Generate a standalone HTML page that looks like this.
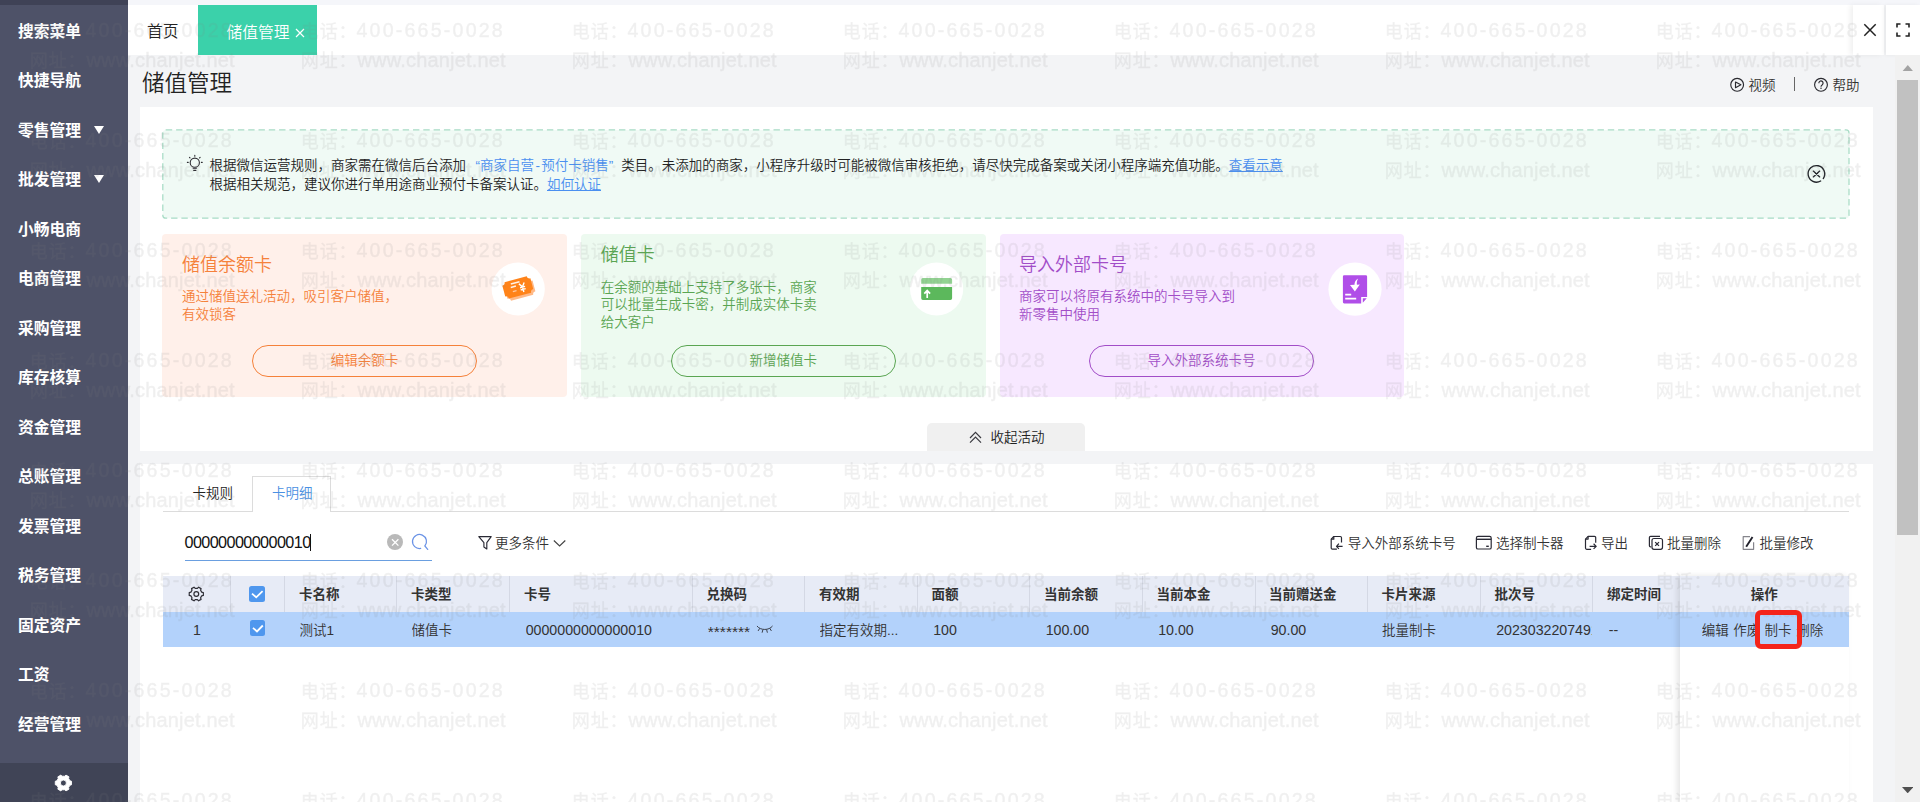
<!DOCTYPE html>
<html lang="zh-CN">
<head>
<meta charset="utf-8">
<title>储值管理</title>
<style>
*{box-sizing:border-box;margin:0;padding:0}
html,body{width:1920px;height:802px;overflow:hidden;background:#f3f4f6;font-family:"Liberation Sans", "Noto Sans CJK SC", sans-serif;color:#333;font-size:13.5px;font-weight:350}
.abs{position:absolute}
.t{position:absolute;white-space:nowrap}
#side{position:absolute;left:0;top:0;width:128px;height:802px;background:#4e5268}
#side .top{position:absolute;left:0;top:0;width:128px;height:5px;background:#3f4256}
#side .mi{position:absolute;left:18px;height:24px;line-height:24px;color:#fff;font-size:15.75px;font-weight:700;white-space:nowrap}
#side .tri{position:absolute;left:93.6px;width:0;height:0;border-left:5.8px solid transparent;border-right:5.8px solid transparent;border-top:8.4px solid #fff}
#side .bot{position:absolute;left:0;top:762.6px;width:128px;height:40px;background:#404456}
#topstrip{position:absolute;left:128px;top:0;width:1792px;height:5px;background:#f5f6fa}
#tabbar{position:absolute;left:128px;top:5px;width:1725px;height:50px;background:#fff}
.panel{position:absolute;left:140px;width:1733px;background:#fff}
.card{position:absolute;top:233.5px;width:404.6px;height:163.2px;border-radius:4px}
.card .ttl{position:absolute;left:19.5px;font-size:18px;line-height:24px;white-space:nowrap}
.card .desc{position:absolute;left:19.5px;font-size:13.5px;line-height:17.6px;white-space:nowrap}
.card .btn{position:absolute;left:89.7px;top:111.6px;width:224.8px;height:32px;border-radius:17px;border:1px solid;line-height:30.6px;text-align:center;font-size:13.5px}
.wm{position:absolute;left:0;top:0;width:1920px;height:802px;overflow:hidden;pointer-events:none;color:#808080;opacity:0.118;-webkit-text-stroke:0.45px #808080;filter:blur(0.5px);font-size:18px;letter-spacing:0.9px;line-height:24px;z-index:50}
.wm div{position:absolute;white-space:nowrap}
.wm .d{letter-spacing:2.2px;margin-left:-1px;font-size:19.6px;position:relative;top:-0.7px}
.wm .w{letter-spacing:0.18px;margin-left:0;font-size:20px;position:relative;top:-0.5px}
.th{position:absolute;top:577px;height:35px;line-height:35px;font-weight:700;font-size:13.5px;color:#333;white-space:nowrap}
.td{position:absolute;top:612.5px;height:35px;line-height:35px;font-size:13.5px;color:#333;white-space:nowrap;overflow:hidden}
.sep{position:absolute;top:576.2px;width:1px;height:35.8px;background:#d4d8e4}
.tb{position:absolute;top:532px;height:24px;line-height:24px;font-size:13.5px;color:#333;white-space:nowrap}
.cb{position:absolute;width:16px;height:16px;border-radius:2.5px;background:#4f97ee}
</style>
</head>
<body>
<div id="side"><div class="top"></div>
<div class="mi" style="top:19.5px">搜索菜单</div>
<div class="mi" style="top:69px">快捷导航</div>
<div class="mi" style="top:118.5px">零售管理</div>
<div class="mi" style="top:168px">批发管理</div>
<div class="mi" style="top:217.5px">小畅电商</div>
<div class="mi" style="top:267px">电商管理</div>
<div class="mi" style="top:316.5px">采购管理</div>
<div class="mi" style="top:366px">库存核算</div>
<div class="mi" style="top:415.5px">资金管理</div>
<div class="mi" style="top:465px">总账管理</div>
<div class="mi" style="top:514.5px">发票管理</div>
<div class="mi" style="top:564px">税务管理</div>
<div class="mi" style="top:613.5px">固定资产</div>
<div class="mi" style="top:663px">工资</div>
<div class="mi" style="top:712.5px">经营管理</div>
<div class="tri" style="top:125.5px"></div>
<div class="tri" style="top:175px"></div>
<div class="bot"></div>
<svg class="abs" style="left:50px;top:770px" width="28" height="28" viewBox="50 770 28 28" ><path fill="#fff" stroke="#fff" stroke-width="0.9" stroke-linejoin="round" fill-rule="evenodd" d="M69.92 780.75L71.52 781.27L71.52 784.73L69.92 785.25L68.61 787.53L68.95 789.17L65.96 790.89L64.72 789.77L62.08 789.77L60.84 790.89L57.85 789.17L58.19 787.53L56.88 785.25L55.28 784.73L55.28 781.27L56.88 780.75L58.19 778.47L57.85 776.83L60.84 775.11L62.08 776.23L64.72 776.23L65.96 775.11L68.95 776.83L68.61 778.47ZM60.4 783a3 3 0 1 0 6 0a3 3 0 1 0-6 0Z"/></svg>
</div>
<div id="topstrip"></div>
<div id="tabbar"></div>
<div class="t" style="left:147px;top:20px;height:24px;line-height:24px;font-size:15.75px;color:#222">首页</div>
<div class="abs" style="left:198px;top:5px;width:119px;height:50px;background:#3bd1aa"></div>
<div class="t" style="left:226.5px;top:20.7px;height:24px;line-height:24px;font-size:15.75px;color:#fff">储值管理</div>
<svg class="abs" style="left:295px;top:27.6px" width="10" height="10" viewBox="0 0 10 10"><path d="M1 1L9 9M9 1L1 9" stroke="#fff" stroke-width="1.2" fill="none"/></svg>
<div class="abs" style="left:1853px;top:5px;width:31px;height:50px;background:#fff;box-shadow:-3px 0 5px rgba(0,0,0,0.06)"></div>
<svg class="abs" style="left:1862.5px;top:22.5px" width="14" height="14" viewBox="0 0 14 14"><path d="M1.3 1.3L12.7 12.7M12.7 1.3L1.3 12.7" stroke="#222" stroke-width="1.5" fill="none"/></svg>
<div class="abs" style="left:1886px;top:5px;width:34px;height:50px;background:#fff;box-shadow:-2px 0 4px rgba(0,0,0,0.05)"></div>
<svg class="abs" style="left:1896px;top:23px" width="14" height="14" viewBox="0 0 14 14"><path d="M1 4.5V1H4.5M9.5 1H13V4.5M13 9.5V13H9.5M4.5 13H1V9.5" stroke="#222" stroke-width="1.6" fill="none"/></svg>
<div class="t" style="left:142px;top:66.8px;height:34px;line-height:34px;font-size:22.5px;color:#222">储值管理</div>
<svg class="abs" style="left:1728px;top:76px" width="18" height="18" viewBox="1728 76 18 18" fill="none" stroke="#2a2a30" stroke-width="1.15"><circle cx="1737.15" cy="84.8" r="6.4"/><path d="M1735.5 82V87.7L1740.9 84.8Z" stroke-linejoin="round"/></svg>
<div class="t" style="left:1748.5px;top:73.5px;height:24px;line-height:24px;font-size:13.5px;color:#333">视频</div>
<div class="abs" style="left:1794px;top:77px;width:1.3px;height:14px;background:#666"></div>
<svg class="abs" style="left:1812px;top:76px" width="18" height="18" viewBox="1812 76 18 18" fill="none" stroke="#2a2a30" stroke-width="1.15"><circle cx="1821" cy="84.8" r="6.4"/><path d="M1818.9 83.3A2.1 2.1 0 1 1 1822.3 84.7C1821.4 85.3 1821 85.7 1821 86.7"/><circle cx="1821" cy="88.3" r="0.75" fill="#2a2a30" stroke="none"/></svg>
<div class="t" style="left:1832.5px;top:73.5px;height:24px;line-height:24px;font-size:13.5px;color:#333">帮助</div>
<div class="panel" style="top:107px;height:344px"></div>
<svg class="abs" style="left:160px;top:127px" width="1692" height="94" viewBox="160 127 1692 94" ><rect x="162.8" y="129.9" width="1686.2" height="88.3" rx="3" fill="#f0faf5" stroke="#a8dcc6" stroke-width="1.25" stroke-dasharray="6.4 3.9"/></svg>
<svg class="abs" style="left:185px;top:153px" width="20" height="20" viewBox="185 153 20 20" fill="none" stroke="#2e2e33" stroke-width="1.1" stroke-linecap="round"><circle cx="194.8" cy="162.7" r="4.6"/><path d="M193.3 168.3H196.3" stroke-width="1.4" stroke="#55555c"/><path d="M193.7 170.4H195.9"/><path d="M194.8 155.4V156.2M187.4 162.4H188.2M201.4 162.4H202.2M189.5 157.4L190 157.9M200.1 157.4L199.6 157.9" stroke-width="1.15"/></svg>
<div class="t" style="left:209.5px;top:155.5px;height:20px;line-height:20px;font-size:13.5px;color:#222">根据微信运营规则，商家需在微信后台添加<span style="color:#4a8ff0;margin-left:9.5px;margin-right:8px">“商家自营<span style="display:inline-block;width:7.3px;text-align:center">-</span>预付卡销售”</span>类目。未添加的商家，小程序升级时可能被微信审核拒绝，请尽快完成备案或关闭小程序端充值功能。<span style="color:#4a8ff0;text-decoration:underline">查看示意</span></div>
<div class="t" style="left:209.5px;top:175.3px;height:20px;line-height:20px;font-size:13.5px;color:#222">根据相关规范，建议你进行单用途商业预付卡备案认证。<span style="color:#4a8ff0;text-decoration:underline">如何认证</span></div>
<svg class="abs" style="left:1805px;top:163px" width="23" height="23" viewBox="1805 163 23 23" fill="none" stroke="#22252a" stroke-width="1.35" stroke-linecap="round"><path d="M1820.67 181.01A8.3 8.3 0 1 1 1823.28 178.54"/><path d="M1813.3 171.1L1819.7 176.9M1819.7 171.1L1813.3 176.9"/></svg>
<div class="card" style="left:162.4px;background:#fff0ea;color:#f5813a"><div class="ttl" style="top:19.3px">储值余额卡</div><div class="desc" style="top:54.8px">通过储值送礼活动，吸引客户储值，</div><div class="desc" style="top:72.4px">有效锁客</div><div class="btn" style="border-color:#f5813a">编辑余额卡</div></div>
<svg class="abs" style="left:488px;top:259px" width="60" height="60" viewBox="488 259 60 60" ><circle cx="518.2" cy="289" r="26.6" fill="#fff"/><g transform="rotate(-15 517.8 287.4)"><path transform="translate(1.5,2.7)" fill="#ffb987" d="M506.3 278.9H529.3a3 3 0 0 0 3 3V292.9a3 3 0 0 0-3 3H506.3a3 3 0 0 0-3-3V281.9a3 3 0 0 0 3-3z"/><path fill="#ff8319" d="M506.3 278.9H529.3a3 3 0 0 0 3 3V292.9a3 3 0 0 0-3 3H506.3a3 3 0 0 0-3-3V281.9a3 3 0 0 0 3-3z"/><path d="M511.9 282.4H520.9M511 285.6H516.3" stroke="#fff1e6" stroke-width="1.5" fill="none"/><path d="M511.9 290.3H515.7" stroke="#ffc9a0" stroke-width="1.3" fill="none"/><path d="M519.8 284.3L522.5 288L525.2 284.3M519.9 288.3H525.1M519.9 290.6H525.1M522.5 288V293.4" stroke="#fff" stroke-width="1.4" fill="none"/></g></svg>
<div class="card" style="left:581.2px;background:#edfaf0;color:#5aa552"><div class="ttl" style="top:9.6px">储值卡</div><div class="desc" style="top:45.35px">在余额的基础上支持了多张卡，商家</div><div class="desc" style="top:62.95px">可以批量生成卡密，并制成实体卡卖</div><div class="desc" style="top:80.55px">给大客户</div><div class="btn" style="border-color:#5aa552">新增储值卡</div></div>
<svg class="abs" style="left:906px;top:259px" width="60" height="60" viewBox="906 259 60 60" ><circle cx="936.6" cy="289" r="26.6" fill="#fff"/><path fill="#92d392" d="M922.9 278.1H950.4a1.7 1.7 0 0 1 1.7 1.7V283.8H921.2V279.8a1.7 1.7 0 0 1 1.7-1.7z"/><path fill="#5cb85c" d="M921.2 287.1H952.1V298.3a1.7 1.7 0 0 1-1.7 1.7H922.9a1.7 1.7 0 0 1-1.7-1.7z"/><path d="M927.2 298V291.3M924.3 293.7L927.2 290.6L930.1 293.7" stroke="#fff" stroke-width="1.7" fill="none"/></svg>
<div class="card" style="left:999.5px;background:#f7e8ff;color:#a24dc8"><div class="ttl" style="top:19.3px">导入外部卡号</div><div class="desc" style="top:54.8px">商家可以将原有系统中的卡号导入到</div><div class="desc" style="top:72.4px">新零售中使用</div><div class="btn" style="border-color:#a24dc8">导入外部系统卡号</div></div>
<svg class="abs" style="left:1325px;top:259px" width="60" height="60" viewBox="1325 259 60 60" ><circle cx="1355" cy="289.2" r="26.6" fill="#fff"/><path fill="#b04ee8" d="M1344.2 275.2H1365.8a1.3 1.3 0 0 1 1.3 1.3V296.9H1361.2V303.4H1344.2a1.3 1.3 0 0 1-1.3-1.3V276.5a1.3 1.3 0 0 1 1.3-1.3z"/><path fill="#b04ee8" d="M1362.8 298.3H1366.7L1362.8 302.8z"/><path d="M1345.2 294.7H1351.2M1345.2 298.6H1356.2" stroke="#fff" stroke-width="1.8" fill="none"/><path fill="#fff" d="M1358.2 278.4c-2.7 1.3-3.8 3.6-3.7 6.4l-4.5 0.3 4.9 6.4 4.9-7-2.9 0.2c-0.3-2.3 0.1-4.3 1.3-6.3z"/></svg>
<div class="abs" style="left:927px;top:423px;width:158px;height:28px;background:#f0f0f0;border-radius:5px 5px 0 0"></div>
<svg class="abs" style="left:967px;top:429px" width="18" height="16" viewBox="967 429 18 16" fill="none" stroke="#3a3a40" stroke-width="1.2"><path d="M970 438L975.5 432.4L981 438M970 442.6L975.5 437L981 442.6"/></svg>
<div class="t" style="left:990.5px;top:425.5px;height:24px;line-height:24px;font-size:13.5px;color:#222">收起活动</div>
<div class="panel" style="top:463.5px;height:340px"></div>
<div class="abs" style="left:163px;top:511px;width:1686px;height:1px;background:#dcdcdc"></div>
<div class="abs" style="left:252px;top:476px;width:78.5px;height:36px;background:#fff;border:1px solid #dcdcdc;border-bottom:none"></div>
<div class="t" style="left:192.5px;top:481.7px;height:24px;line-height:24px;font-size:13.5px;color:#222">卡规则</div>
<div class="t" style="left:272px;top:481.7px;height:24px;line-height:24px;font-size:13.5px;color:#4a90e2">卡明细</div>
<div class="t" style="left:184.5px;top:530px;height:24px;line-height:24px;font-size:16.2px;letter-spacing:-0.6px;color:#111">000000000000010</div>
<div class="abs" style="left:310.3px;top:533.6px;width:1.1px;height:17px;background:#111"></div>
<div class="abs" style="left:184.5px;top:560px;width:247px;height:1.3px;background:#6a9fe0"></div>
<svg class="abs" style="left:385px;top:532px" width="20" height="20" viewBox="385 532 20 20" ><circle cx="395" cy="542" r="8" fill="#b9b9b9"/><path d="M392 539.2L398.4 545.6M398.4 539.2L392 545.6" stroke="#fff" stroke-width="1.3" fill="none"/></svg>
<svg class="abs" style="left:410px;top:532px" width="20" height="20" viewBox="410 532 20 20" ><path d="M420.7 548.4A7 7 0 1 1 424.86 546L427.7 549.4" fill="none" stroke="#6b93e6" stroke-width="1.25" stroke-linecap="round"/></svg>
<svg class="abs" style="left:476px;top:534px" width="18" height="18" viewBox="476 534 18 18" ><path d="M478.8 536.6H491.2L486.8 542.6V549L483.9 547V542.6Z" fill="none" stroke="#2a2a35" stroke-width="1.15" stroke-linejoin="round"/></svg>
<div class="tb" style="left:495px">更多条件</div>
<svg class="abs" style="left:551px;top:536px" width="18" height="14" viewBox="551 536 18 14" ><path d="M553.85 540.5L559.6 546L565.3 540.5" fill="none" stroke="#444" stroke-width="1.15"/></svg>
<div class="tb" style="left:1347.8px">导入外部系统卡号</div>
<div class="tb" style="left:1496px">选择制卡器</div>
<div class="tb" style="left:1601px">导出</div>
<div class="tb" style="left:1667px">批量删除</div>
<div class="tb" style="left:1759.5px">批量修改</div>
<svg class="abs" style="left:1328px;top:533px" width="18" height="19" viewBox="1328 533 18 19" fill="none" stroke="#2a2a35" stroke-width="1.2" stroke-linejoin="round"><path d="M1341.5 542.6V537.7a1.2 1.2 0 0 0-1.2-1.2H1333.8L1331.2 539.2V548a1.2 1.2 0 0 0 1.2 1.2H1336.9"/><path d="M1333.8 536.5V539.2H1331.2"/><path d="M1342.6 546.3H1336.7M1338.9 543.7L1336.5 546.3L1338.9 548.9"/></svg>
<svg class="abs" style="left:1474px;top:533px" width="20" height="19" viewBox="1474 533 20 19" fill="none" stroke="#2a2a35" stroke-width="1.2" stroke-linejoin="round"><rect x="1476.4" y="536.4" width="14.8" height="12.6" rx="1.6"/><path d="M1476.4 539.3H1491.2" stroke-width="1.4"/><path d="M1486.2 546.3H1488.8" stroke-width="1.4"/></svg>
<svg class="abs" style="left:1583px;top:533px" width="18" height="19" viewBox="1583 533 18 19" fill="none" stroke="#2a2a35" stroke-width="1.2" stroke-linejoin="round"><path d="M1595.7 542.8V537.6a1.2 1.2 0 0 0-1.2-1.2H1588.1L1585.5 539.1V548.1a1.2 1.2 0 0 0 1.2 1.2H1591.1"/><path d="M1588.1 536.4V539.1H1585.5"/><path d="M1589.6 546.35H1596M1593.6 543.8L1596.2 546.35L1593.6 548.9"/></svg>
<svg class="abs" style="left:1647px;top:533px" width="18" height="19" viewBox="1647 533 18 19" fill="none" stroke="#2a2a35" stroke-width="1.2" stroke-linejoin="round"><path d="M1660 536.3H1650.6a1.2 1.2 0 0 0-1.2 1.2V545.7a1.2 1.2 0 0 0 1.2 1.2H1651.2"/><rect x="1652" y="538.5" width="10.5" height="10.8" rx="2"/><path d="M1655.2 542.1L1659 545.9M1659 542.1L1655.2 545.9" stroke-width="1.3"/></svg>
<svg class="abs" style="left:1741px;top:533px" width="18" height="19" viewBox="1741 533 18 19" fill="none" stroke="#2a2a35" stroke-width="1.2" stroke-linejoin="round"><path d="M1750 536.7H1743.2V549.3H1753.6V542.2" stroke="#85858c"/><path d="M1752.5 536.9L1746.2 546.8" stroke="#22222c" stroke-width="1.9"/></svg>
<div class="abs" style="left:163px;top:576.2px;width:1686px;height:36px;background:#e7ebf6"></div>
<div class="abs" style="left:163px;top:612px;width:1686px;height:35.3px;background:#b3d2fb"></div>
<div class="sep" style="left:230px"></div><div class="sep" style="left:283.5px"></div><div class="sep" style="left:395.9px"></div><div class="sep" style="left:508.5px"></div><div class="sep" style="left:691.5px"></div><div class="sep" style="left:804.1px"></div><div class="sep" style="left:916.7px"></div><div class="sep" style="left:1029.4px"></div><div class="sep" style="left:1141.9px"></div><div class="sep" style="left:1254.5px"></div><div class="sep" style="left:1366.9px"></div><div class="sep" style="left:1479.6px"></div><div class="sep" style="left:1592px"></div>
<div class="th" style="left:299px">卡名称</div><div class="td" style="left:299.5px;width:96.5px">测试1</div>
<div class="th" style="left:411px">卡类型</div><div class="td" style="left:411.5px;width:97.5px">储值卡</div>
<div class="th" style="left:524px">卡号</div><div class="td" style="left:525.7px;width:165.8px;font-size:14.2px">0000000000000010</div>
<div class="th" style="left:706.5px">兑换码</div>
<div class="th" style="left:819px">有效期</div><div class="td" style="left:819.5px;width:97px">指定有效期...</div>
<div class="th" style="left:931.5px">面额</div><div class="td" style="left:933.2px;width:95.8px;font-size:14.2px">100</div>
<div class="th" style="left:1044px">当前余额</div><div class="td" style="left:1045.7px;width:95.8px;font-size:14.2px">100.00</div>
<div class="th" style="left:1156.5px">当前本金</div><div class="td" style="left:1158.2px;width:95.8px;font-size:14.2px">10.00</div>
<div class="th" style="left:1269px">当前赠送金</div><div class="td" style="left:1270.7px;width:95.8px;font-size:14.2px">90.00</div>
<div class="th" style="left:1381.5px">卡片来源</div><div class="td" style="left:1382px;width:97.5px">批量制卡</div>
<div class="th" style="left:1494.5px">批次号</div><div class="td" style="left:1496.2px;width:95.8px;font-size:14.2px">2023032207491</div>
<div class="th" style="left:1607px">绑定时间</div><div class="td" style="left:1608.7px;width:70.3px;font-size:14.2px">--</div>
<div class="td" style="left:707.8px;top:613.7px;width:60px;font-size:15.5px">*******</div>
<svg class="abs" style="left:754px;top:622px" width="22" height="14" viewBox="754 622 22 14" fill="none" stroke="#3a3f4a" stroke-width="1" stroke-linecap="round"><path d="M757.2 626.3C760.5 630.6 769 630.6 772.3 626.3M759.5 628.7L758.3 630.6M762.8 630L762.2 632.3M766.7 630L767.3 632.3M770 628.7L771.2 630.6"/></svg>
<svg class="abs" style="left:186px;top:584px" width="21" height="20" viewBox="186 584 21 20" fill="none" stroke="#2e2e36" stroke-width="1.2" stroke-linejoin="round"><path d="M201.69 592.14L203.36 592.56L203.36 595.44L201.69 595.86L200.6 597.74L201.07 599.39L198.58 600.83L197.39 599.6L195.21 599.6L194.02 600.83L191.53 599.39L192 597.74L190.91 595.86L189.24 595.44L189.24 592.56L190.91 592.14L192 590.26L191.53 588.61L194.02 587.17L195.21 588.4L197.39 588.4L198.58 587.17L201.07 588.61L200.6 590.26Z"/><circle cx="196.3" cy="594" r="2.4"/></svg>
<div class="td" style="left:193px;font-size:14.2px">1</div>
<div class="cb" style="left:249px;top:586px"></div>
<svg class="abs" style="left:249px;top:586px" width="16" height="16" viewBox="249 586 16 16" ><path d="M252 593.6L256.2 597.3L262.6 591.2" fill="none" stroke="#fff" stroke-width="1.8"/></svg>
<div class="cb" style="left:250px;top:620.3px;width:15px;height:15.4px"></div>
<svg class="abs" style="left:250px;top:620px" width="16" height="16" viewBox="250 620 16 16" ><path d="M253 627.9L257 631.5L262.8 625.5" fill="none" stroke="#fff" stroke-width="1.8"/></svg>
<div class="abs" style="left:1679.6px;top:576.2px;width:169.4px;height:226px;background:#fff;box-shadow:-3px 0 6px rgba(0,0,0,0.1)"></div>
<div class="abs" style="left:1679.6px;top:576.2px;width:169.4px;height:36px;background:#e7ebf6"></div>
<div class="abs" style="left:1679.6px;top:612px;width:169.4px;height:35.3px;background:#b3d2fb"></div>
<div class="th" style="left:1679.5px;width:169.5px;text-align:center">操作</div>
<div class="td" style="left:1701.8px">编辑</div><div class="td" style="left:1733.3px">作废</div><div class="td" style="left:1764.6px">制卡</div><div class="td" style="left:1796.3px">删除</div>
<div class="abs" style="left:1755.2px;top:609.8px;width:46.4px;height:38.8px;border:5px solid #f4241b;border-radius:6px;z-index:60"></div>
<div class="abs" style="left:1895px;top:55px;width:25px;height:747px;background:#f1f1f1"></div>
<div class="abs" style="left:1897px;top:80px;width:21px;height:455px;background:#c1c1c1"></div>
<svg class="abs" style="left:1901.6px;top:65.2px" width="11.6" height="6" viewBox="0 0 12 7"><path d="M0 7L6 0L12 7Z" fill="#a3a3a3"/></svg>
<svg class="abs" style="left:1901.7px;top:786.7px" width="11.4" height="6.3" viewBox="0 0 12 7" preserveAspectRatio="none"><path d="M0 0L6 7L12 0Z" fill="#505050"/></svg>
<div class="wm">
<div style="left:29.8px;top:18.9px">电话：<span class="d">400-665-0028</span></div><div style="left:29.8px;top:48.1px">网址：<span class="w">www.chanjet.net</span></div>
<div style="left:300.8px;top:18.9px">电话：<span class="d">400-665-0028</span></div><div style="left:300.8px;top:48.1px">网址：<span class="w">www.chanjet.net</span></div>
<div style="left:571.8px;top:18.9px">电话：<span class="d">400-665-0028</span></div><div style="left:571.8px;top:48.1px">网址：<span class="w">www.chanjet.net</span></div>
<div style="left:842.8px;top:18.9px">电话：<span class="d">400-665-0028</span></div><div style="left:842.8px;top:48.1px">网址：<span class="w">www.chanjet.net</span></div>
<div style="left:1113.8px;top:18.9px">电话：<span class="d">400-665-0028</span></div><div style="left:1113.8px;top:48.1px">网址：<span class="w">www.chanjet.net</span></div>
<div style="left:1384.8px;top:18.9px">电话：<span class="d">400-665-0028</span></div><div style="left:1384.8px;top:48.1px">网址：<span class="w">www.chanjet.net</span></div>
<div style="left:1655.8px;top:18.9px">电话：<span class="d">400-665-0028</span></div><div style="left:1655.8px;top:48.1px">网址：<span class="w">www.chanjet.net</span></div>
<div style="left:29.8px;top:128.9px">电话：<span class="d">400-665-0028</span></div><div style="left:29.8px;top:158.1px">网址：<span class="w">www.chanjet.net</span></div>
<div style="left:300.8px;top:128.9px">电话：<span class="d">400-665-0028</span></div><div style="left:300.8px;top:158.1px">网址：<span class="w">www.chanjet.net</span></div>
<div style="left:571.8px;top:128.9px">电话：<span class="d">400-665-0028</span></div><div style="left:571.8px;top:158.1px">网址：<span class="w">www.chanjet.net</span></div>
<div style="left:842.8px;top:128.9px">电话：<span class="d">400-665-0028</span></div><div style="left:842.8px;top:158.1px">网址：<span class="w">www.chanjet.net</span></div>
<div style="left:1113.8px;top:128.9px">电话：<span class="d">400-665-0028</span></div><div style="left:1113.8px;top:158.1px">网址：<span class="w">www.chanjet.net</span></div>
<div style="left:1384.8px;top:128.9px">电话：<span class="d">400-665-0028</span></div><div style="left:1384.8px;top:158.1px">网址：<span class="w">www.chanjet.net</span></div>
<div style="left:1655.8px;top:128.9px">电话：<span class="d">400-665-0028</span></div><div style="left:1655.8px;top:158.1px">网址：<span class="w">www.chanjet.net</span></div>
<div style="left:29.8px;top:238.9px">电话：<span class="d">400-665-0028</span></div><div style="left:29.8px;top:268.1px">网址：<span class="w">www.chanjet.net</span></div>
<div style="left:300.8px;top:238.9px">电话：<span class="d">400-665-0028</span></div><div style="left:300.8px;top:268.1px">网址：<span class="w">www.chanjet.net</span></div>
<div style="left:571.8px;top:238.9px">电话：<span class="d">400-665-0028</span></div><div style="left:571.8px;top:268.1px">网址：<span class="w">www.chanjet.net</span></div>
<div style="left:842.8px;top:238.9px">电话：<span class="d">400-665-0028</span></div><div style="left:842.8px;top:268.1px">网址：<span class="w">www.chanjet.net</span></div>
<div style="left:1113.8px;top:238.9px">电话：<span class="d">400-665-0028</span></div><div style="left:1113.8px;top:268.1px">网址：<span class="w">www.chanjet.net</span></div>
<div style="left:1384.8px;top:238.9px">电话：<span class="d">400-665-0028</span></div><div style="left:1384.8px;top:268.1px">网址：<span class="w">www.chanjet.net</span></div>
<div style="left:1655.8px;top:238.9px">电话：<span class="d">400-665-0028</span></div><div style="left:1655.8px;top:268.1px">网址：<span class="w">www.chanjet.net</span></div>
<div style="left:29.8px;top:348.9px">电话：<span class="d">400-665-0028</span></div><div style="left:29.8px;top:378.1px">网址：<span class="w">www.chanjet.net</span></div>
<div style="left:300.8px;top:348.9px">电话：<span class="d">400-665-0028</span></div><div style="left:300.8px;top:378.1px">网址：<span class="w">www.chanjet.net</span></div>
<div style="left:571.8px;top:348.9px">电话：<span class="d">400-665-0028</span></div><div style="left:571.8px;top:378.1px">网址：<span class="w">www.chanjet.net</span></div>
<div style="left:842.8px;top:348.9px">电话：<span class="d">400-665-0028</span></div><div style="left:842.8px;top:378.1px">网址：<span class="w">www.chanjet.net</span></div>
<div style="left:1113.8px;top:348.9px">电话：<span class="d">400-665-0028</span></div><div style="left:1113.8px;top:378.1px">网址：<span class="w">www.chanjet.net</span></div>
<div style="left:1384.8px;top:348.9px">电话：<span class="d">400-665-0028</span></div><div style="left:1384.8px;top:378.1px">网址：<span class="w">www.chanjet.net</span></div>
<div style="left:1655.8px;top:348.9px">电话：<span class="d">400-665-0028</span></div><div style="left:1655.8px;top:378.1px">网址：<span class="w">www.chanjet.net</span></div>
<div style="left:29.8px;top:458.9px">电话：<span class="d">400-665-0028</span></div><div style="left:29.8px;top:488.1px">网址：<span class="w">www.chanjet.net</span></div>
<div style="left:300.8px;top:458.9px">电话：<span class="d">400-665-0028</span></div><div style="left:300.8px;top:488.1px">网址：<span class="w">www.chanjet.net</span></div>
<div style="left:571.8px;top:458.9px">电话：<span class="d">400-665-0028</span></div><div style="left:571.8px;top:488.1px">网址：<span class="w">www.chanjet.net</span></div>
<div style="left:842.8px;top:458.9px">电话：<span class="d">400-665-0028</span></div><div style="left:842.8px;top:488.1px">网址：<span class="w">www.chanjet.net</span></div>
<div style="left:1113.8px;top:458.9px">电话：<span class="d">400-665-0028</span></div><div style="left:1113.8px;top:488.1px">网址：<span class="w">www.chanjet.net</span></div>
<div style="left:1384.8px;top:458.9px">电话：<span class="d">400-665-0028</span></div><div style="left:1384.8px;top:488.1px">网址：<span class="w">www.chanjet.net</span></div>
<div style="left:1655.8px;top:458.9px">电话：<span class="d">400-665-0028</span></div><div style="left:1655.8px;top:488.1px">网址：<span class="w">www.chanjet.net</span></div>
<div style="left:29.8px;top:568.9px">电话：<span class="d">400-665-0028</span></div><div style="left:29.8px;top:598.1px">网址：<span class="w">www.chanjet.net</span></div>
<div style="left:300.8px;top:568.9px">电话：<span class="d">400-665-0028</span></div><div style="left:300.8px;top:598.1px">网址：<span class="w">www.chanjet.net</span></div>
<div style="left:571.8px;top:568.9px">电话：<span class="d">400-665-0028</span></div><div style="left:571.8px;top:598.1px">网址：<span class="w">www.chanjet.net</span></div>
<div style="left:842.8px;top:568.9px">电话：<span class="d">400-665-0028</span></div><div style="left:842.8px;top:598.1px">网址：<span class="w">www.chanjet.net</span></div>
<div style="left:1113.8px;top:568.9px">电话：<span class="d">400-665-0028</span></div><div style="left:1113.8px;top:598.1px">网址：<span class="w">www.chanjet.net</span></div>
<div style="left:1384.8px;top:568.9px">电话：<span class="d">400-665-0028</span></div><div style="left:1384.8px;top:598.1px">网址：<span class="w">www.chanjet.net</span></div>
<div style="left:1655.8px;top:568.9px">电话：<span class="d">400-665-0028</span></div><div style="left:1655.8px;top:598.1px">网址：<span class="w">www.chanjet.net</span></div>
<div style="left:29.8px;top:678.9px">电话：<span class="d">400-665-0028</span></div><div style="left:29.8px;top:708.1px">网址：<span class="w">www.chanjet.net</span></div>
<div style="left:300.8px;top:678.9px">电话：<span class="d">400-665-0028</span></div><div style="left:300.8px;top:708.1px">网址：<span class="w">www.chanjet.net</span></div>
<div style="left:571.8px;top:678.9px">电话：<span class="d">400-665-0028</span></div><div style="left:571.8px;top:708.1px">网址：<span class="w">www.chanjet.net</span></div>
<div style="left:842.8px;top:678.9px">电话：<span class="d">400-665-0028</span></div><div style="left:842.8px;top:708.1px">网址：<span class="w">www.chanjet.net</span></div>
<div style="left:1113.8px;top:678.9px">电话：<span class="d">400-665-0028</span></div><div style="left:1113.8px;top:708.1px">网址：<span class="w">www.chanjet.net</span></div>
<div style="left:1384.8px;top:678.9px">电话：<span class="d">400-665-0028</span></div><div style="left:1384.8px;top:708.1px">网址：<span class="w">www.chanjet.net</span></div>
<div style="left:1655.8px;top:678.9px">电话：<span class="d">400-665-0028</span></div><div style="left:1655.8px;top:708.1px">网址：<span class="w">www.chanjet.net</span></div>
<div style="left:29.8px;top:788.9px">电话：<span class="d">400-665-0028</span></div><div style="left:29.8px;top:818.1px">网址：<span class="w">www.chanjet.net</span></div>
<div style="left:300.8px;top:788.9px">电话：<span class="d">400-665-0028</span></div><div style="left:300.8px;top:818.1px">网址：<span class="w">www.chanjet.net</span></div>
<div style="left:571.8px;top:788.9px">电话：<span class="d">400-665-0028</span></div><div style="left:571.8px;top:818.1px">网址：<span class="w">www.chanjet.net</span></div>
<div style="left:842.8px;top:788.9px">电话：<span class="d">400-665-0028</span></div><div style="left:842.8px;top:818.1px">网址：<span class="w">www.chanjet.net</span></div>
<div style="left:1113.8px;top:788.9px">电话：<span class="d">400-665-0028</span></div><div style="left:1113.8px;top:818.1px">网址：<span class="w">www.chanjet.net</span></div>
<div style="left:1384.8px;top:788.9px">电话：<span class="d">400-665-0028</span></div><div style="left:1384.8px;top:818.1px">网址：<span class="w">www.chanjet.net</span></div>
<div style="left:1655.8px;top:788.9px">电话：<span class="d">400-665-0028</span></div><div style="left:1655.8px;top:818.1px">网址：<span class="w">www.chanjet.net</span></div>
</div>
</body>
</html>
